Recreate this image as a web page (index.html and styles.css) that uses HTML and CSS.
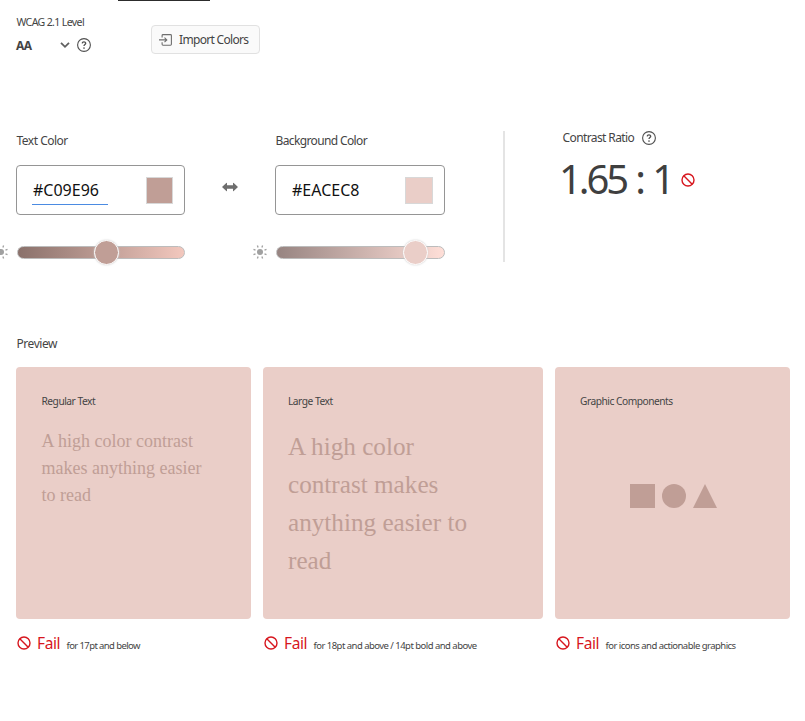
FILE: index.html
```html
<!DOCTYPE html>
<html lang="en">
<head>
<meta charset="utf-8">
<title>Contrast Checker</title>
<link rel="stylesheet" href="styles.css">
</head>
<body>
<svg class="defs" width="0" height="0" aria-hidden="true">
  <symbol id="help" viewBox="0 0 14 14"><circle cx="7" cy="7" r="6.4" fill="none" stroke="#505050" stroke-width="1.1"/><path d="M5.2 5.4C5.3 3.4 8.7 3.4 8.7 5.3C8.7 6.6 7 6.6 7 8.1" fill="none" stroke="#505050" stroke-width="1.3"/><circle cx="7" cy="10" r=".85" fill="#505050"/></symbol>
  <symbol id="fail" viewBox="0 0 14 14"><circle cx="7" cy="7" r="6" fill="none" stroke="#d7161e" stroke-width="1.4"/><path d="M2.8 2.8l8.4 8.4" stroke="#d7161e" stroke-width="1.4"/></symbol>
  <symbol id="sun" viewBox="0 0 14 14"><circle cx="7" cy="7" r="3" fill="#a0a0a0"/><path d="M4.4 .5l.7 2M9.6 .5l-.7 2M.5 4.3l2 .8M13.5 4.3l-2 .8M.5 9.7l2-.8M13.5 9.7l-2-.8M4.4 13.5l.7-2M9.6 13.5l-.7-2" stroke="#a0a0a0" stroke-width="1.3"/></symbol>
</svg>
<div class="tab-line"></div>
<header class="toolbar">
  <div class="level">
    <div class="level-label">WCAG 2.1 Level</div>
    <div class="level-row">
      <b class="level-value">AA</b>
      <svg class="chevron" width="10" height="6" viewBox="0 0 10 6"><path d="M1 .8l4 4 4-4" fill="none" stroke="#606060" stroke-width="1.8"/></svg>
      <svg class="help" width="14" height="14"><use href="#help"/></svg>
    </div>
  </div>
  <button class="import"><svg width="13" height="12" viewBox="0 0 13 12"><path d="M3.1 3.6V1.5Q3.1.6 4 .6h7.5q.9 0 .9.9v8.8q0 .9-.9.9H4q-.9 0-.9-.9V8.2M0 5.9h7.4M5.5 3.6l2.3 2.3-2.3 2.3" fill="none" stroke="#6e6e6e" stroke-width="1.1"/></svg><span>Import Colors</span></button>
</header>
<section class="controls">
  <div class="color text-color">
    <div class="label label-text">Text Color</div>
    <div class="field"><span class="hex focused">#C09E96</span><i class="swatch"></i></div>
    <div class="slider"><svg class="sun" width="14" height="14"><use href="#sun"/></svg><i class="knob"></i></div>
  </div>
  <svg class="swap" width="16" height="10" viewBox="0 0 16 10"><path d="M0 5L4.3.9Q5 .5 5 1.3v2h6v-2q0-.8.7-.4L16 5l-4.3 4.1q-.7.4-.7-.4v-2H5v2q0 .8-.7.4z" fill="#6e6e6e"/></svg>
  <div class="color bg-color">
    <div class="label label-bg">Background Color</div>
    <div class="field"><span class="hex">#EACEC8</span><i class="swatch"></i></div>
    <div class="slider"><svg class="sun" width="14" height="14"><use href="#sun"/></svg><i class="knob"></i></div>
  </div>
  <div class="ratio">
    <div class="ratio-head"><span class="ratio-label">Contrast Ratio</span><svg width="14" height="14"><use href="#help"/></svg></div>
    <div class="ratio-row"><span class="ratio-value">1.65 : 1</span><svg width="14" height="14"><use href="#fail"/></svg></div>
  </div>
</section>
<section class="preview">
  <div class="label label-preview">Preview</div>
  <div class="cards">
    <article><div class="card"><div class="card-title t1">Regular Text</div><p class="regular">A high color contrast makes anything easier to read</p></div>
      <div class="result"><svg width="14" height="14"><use href="#fail"/></svg><span class="fail">Fail</span><span class="note n1">for 17pt and below</span></div></article>
    <article><div class="card"><div class="card-title t2">Large Text</div><p class="large">A high color contrast makes anything easier to read</p></div>
      <div class="result"><svg width="14" height="14"><use href="#fail"/></svg><span class="fail">Fail</span><span class="note n2">for 18pt and above / 14pt bold and above</span></div></article>
    <article><div class="card"><div class="card-title t3">Graphic Components</div>
      <svg class="shapes" width="87" height="24" viewBox="0 0 87 24"><path d="M0 0h25v24H0zM75 0l12 24H63z"/><circle cx="44" cy="12" r="12"/></svg></div>
      <div class="result"><svg width="14" height="14"><use href="#fail"/></svg><span class="fail">Fail</span><span class="note n3">for icons and actionable graphics</span></div></article>
  </div>
</section>
</body>
</html>
```
FILE: styles.css
```css
* { box-sizing: border-box; }
body { margin: 0; background: #fff; color: #444; font-family: "Noto Sans", sans-serif; overflow: hidden; height: 721px; }
svg { display: block; flex: none; overflow: visible; }
span, b, .label, .card-title, .level-label { white-space: nowrap; }
.defs { position: absolute; }
.tab-line { width: 92px; height: 1px; margin-left: 118px; background: #2c2c2c; }
.toolbar { display: flex; height: 130px; padding-left: 16px; }
.level { width: 135px; padding-top: 13px; }
.level-label { padding-left: .5px; font-size: 10.6px; line-height: 16px; letter-spacing: -.65px; }
.level-row { display: flex; align-items: center; height: 16px; margin-top: 7px; }
.level-value { width: 44px; font-size: 12px; letter-spacing: -.5px; }
.help { margin-left: 7px; }
.import { display: flex; align-items: center; gap: 7px; width: 109px; height: 29px; margin-top: 24px; padding: 0 0 0 7px; border: 1px solid #e1e1e1; border-radius: 4px; background: #fafafa; color: #444; font: 12px "Noto Sans", sans-serif; letter-spacing: -.68px; }
.controls { display: flex; height: 131px; padding-left: 16px; }
.color { width: 169px; }
.bg-color { width: 170px; margin-left: 37px; }
.label { padding-left: .5px; font-size: 12px; line-height: 18px; letter-spacing: -.45px; }
.label-text { letter-spacing: -.5px; }
.label-bg { letter-spacing: -.63px; }
.color .label { margin-top: 1px; }
.field { display: flex; align-items: center; justify-content: space-between; height: 50px; margin-top: 15px; padding: 0 11px 0 15px; border: 1px solid #959595; border-radius: 4px; }
.hex { width: 76px; height: 30px; padding-left: 1px; color: #111; font-size: 16px; line-height: 30px; letter-spacing: 0; }
.focused { border-bottom: 1px solid #4b8be2; }
.swatch { width: 27px; height: 27px; border: 1px solid #d8d8d8; background: #c09e96; }
.bg-color .swatch { width: 28px; background: #eacec8; }
.slider { position: relative; height: 13px; margin: 31px 0 0 1px; border: 1px solid #bcbcbc; border-radius: 7px; background: linear-gradient(90deg, #8a716b, #c09e96 53%, #f3c8be); }
.bg-color .slider { background: linear-gradient(90deg, #978481, #ffdfd8); }
.knob { position: absolute; left: 76px; top: -7px; width: 25px; height: 25px; border: 1px solid #fff; border-radius: 50%; background: #c09e96; box-shadow: 0 0 2px #ccc; }
.bg-color .knob { left: 126px; background: #eacec8; }
.sun { position: absolute; left: -24px; top: -2px; }
.swap { margin: 51px 0 0 37px; }
.ratio { width: 200px; height: 131px; margin-left: 58px; padding-left: 57px; border-left: 2px solid #e4e4e4; }
.ratio-head { display: flex; align-items: center; gap: 8px; height: 14px; }
.ratio-label { width: 72px; padding-left: .5px; font-size: 12px; line-height: 14px; letter-spacing: -.6px; }
.ratio-row { display: flex; align-items: center; height: 50px; margin-top: 9px; }
.ratio-row svg { margin-top: 2px; }
.ratio-value { width: 121px; margin-left: -3px; margin-right: 1px; color: #3f3f3f; font-size: 40px; line-height: 50px; letter-spacing: -3.1px; word-spacing: 2px; }
.preview { padding: 73px 15px 0 16px; }
.cards { display: grid; grid-template-columns: 235px 280px 235px; gap: 12px; margin-top: 14px; }
.card { height: 252px; padding: 25px; border-radius: 4px; background: #eacec8; }
.card-title { font-size: 10.2px; line-height: 18px; letter-spacing: -.48px; }
.card p { margin: 0; color: #c09e96; font-family: "Liberation Serif", serif; }
.card .regular { width: 170px; margin-top: 18px; padding-left: .5px; font-size: 18px; line-height: 27px; }
.card .large { width: 200px; margin-top: 18px; font-size: 25.2px; line-height: 38px; }
.t1 { padding-left: .5px; }
.shapes { margin: 74px auto 0 50px; fill: #c09e96; }
.result { display: flex; align-items: center; height: 24px; margin: 12px 0 0 1px; }
.fail { width: 29px; margin: 0 0 0 6px; color: #d7161e; font-size: 15.5px; letter-spacing: -.4px; }
.note { margin: 6px 0 0 .5px; font-size: 9.5px; line-height: 14px; letter-spacing: -.53px; }
.n1 { letter-spacing: -.6px; }
```
